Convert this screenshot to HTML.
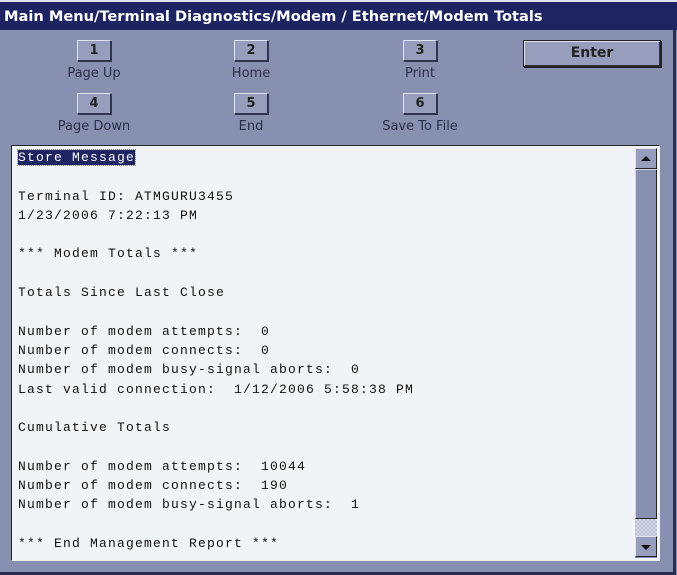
<!DOCTYPE html>
<html><head><style>
body{margin:0;width:677px;height:575px;background:#8890b2;position:relative;overflow:hidden;font-family:"DejaVu Sans","Liberation Sans",sans-serif}
.title{position:absolute;left:0;top:0;width:677px;height:30px;background:#1d2461;color:#fff;font-weight:bold;font-size:14.6px;line-height:30px;padding-left:4px;box-sizing:border-box;border-top:2px solid #dfe3ee}
.frame{position:absolute;left:0;top:30px;width:673px;height:542px;border-right:3px solid #2a2f50;border-bottom:3px solid #2a2f50}
.btn{position:absolute;width:32px;height:19px;background:#969dbd;border:1px solid #30344f;border-top-color:#e0e3ee;border-left-color:#e0e3ee;box-shadow:1px 1px 0 #30344f;text-align:center;font-weight:bold;font-size:13px;line-height:19px;color:#222}
.lbl{position:absolute;width:140px;text-align:center;font-size:13px;color:#2b2f45}
.enter{position:absolute;left:523px;top:40px;width:136px;height:25px;background:#969dbd;border:1px solid #222;box-shadow:inset 1px 1px 0 #e0e3ee,inset -1px -1px 0 #333,1px 1px 0 #222;text-align:center;font-weight:bold;font-size:14px;line-height:25px;color:#222}
.box{position:absolute;left:11px;top:145px;width:647px;height:414px;background:#f1f4f6;border:1px solid #222;border-right-color:#eee;border-bottom-color:#eee}
pre{position:absolute;left:6px;top:2px;margin:0;font-family:"Liberation Mono",monospace;font-size:13px;letter-spacing:1.2px;line-height:19.3px;color:#111}
.sel{background:#1d2461;color:#fff;outline:1px dotted #888}
.sb{position:absolute;left:623px;top:2px;width:22px;height:410px;background:#8890b2}
.ar{position:absolute;left:0;width:20px;height:19px;background:#969dbd;border:1px solid #222;border-top-color:#e0e3ee;border-left-color:#e0e3ee}
.thumb{position:absolute;left:0;top:21px;width:20px;height:348px;background:#8890b2;border:1px solid #222;border-top-color:#d0d4e4;border-left-color:#d0d4e4}
.track{position:absolute;left:0;top:371px;width:22px;height:17px;background:repeating-conic-gradient(#b8bdd2 0 25%,#d8dbe6 0 50%) 0 0/4px 4px}
</style></head><body>
<div class="title">Main Menu/Terminal Diagnostics/Modem / Ethernet/Modem Totals</div>
<div class="frame"></div>
<div class="btn" style="left:77px;top:40px">1</div><div class="lbl" style="left:24px;top:66px">Page Up</div>
<div class="btn" style="left:234px;top:40px">2</div><div class="lbl" style="left:181px;top:66px">Home</div>
<div class="btn" style="left:403px;top:40px">3</div><div class="lbl" style="left:350px;top:66px">Print</div>
<div class="btn" style="left:77px;top:93px">4</div><div class="lbl" style="left:24px;top:119px">Page Down</div>
<div class="btn" style="left:234px;top:93px">5</div><div class="lbl" style="left:181px;top:119px">End</div>
<div class="btn" style="left:403px;top:93px">6</div><div class="lbl" style="left:350px;top:119px">Save To File</div>
<div class="enter">Enter</div>
<div class="box">
<pre><span class="sel">Store Message</span>

Terminal ID: ATMGURU3455
1/23/2006 7:22:13 PM

*** Modem Totals ***

Totals Since Last Close

Number of modem attempts:  0
Number of modem connects:  0
Number of modem busy-signal aborts:  0
Last valid connection:  1/12/2006 5:58:38 PM

Cumulative Totals

Number of modem attempts:  10044
Number of modem connects:  190
Number of modem busy-signal aborts:  1

*** End Management Report ***</pre>
<div class="sb">
<div class="ar" style="top:0"><svg width="20" height="19"><path d="M5 12 L15 12 L10 7Z" fill="#111"/></svg></div>
<div class="thumb"></div>
<div class="track"></div>
<div class="ar" style="top:388px"><svg width="20" height="19"><path d="M5 8 L15 8 L10 13Z" fill="#111"/></svg></div>
</div>
</div>
</body></html>
